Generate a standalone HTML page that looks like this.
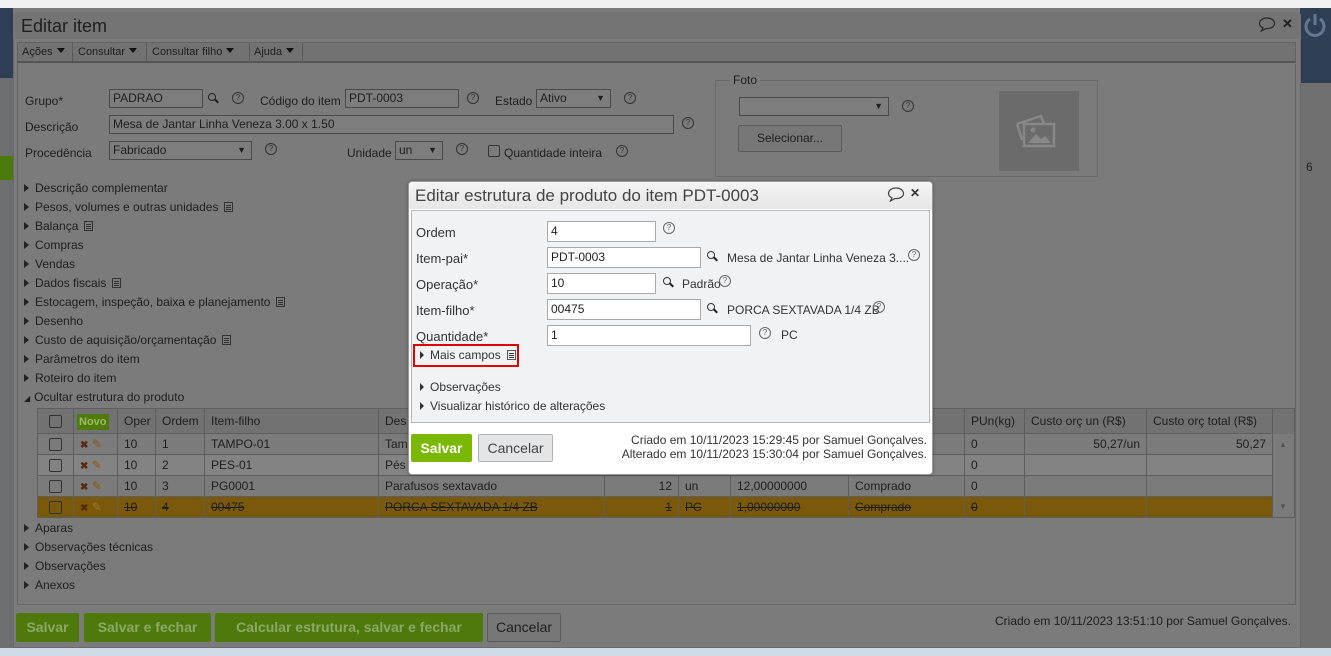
<!DOCTYPE html>
<html><head><meta charset="utf-8"><style>
*{box-sizing:border-box;margin:0;padding:0}
body{width:1331px;height:656px;position:relative;overflow:hidden;background:#7b7b7b;font-family:"Liberation Sans",sans-serif;font-size:12px;color:#1e1e1e}
.a{position:absolute;white-space:nowrap}
.q{position:absolute;width:12px;height:12px;border:1px solid #333;border-radius:50%;font-size:8px;line-height:10px;text-align:center;color:#333}
.inp{position:absolute;border:1px solid #4a4a4a;background:#7d7d7d;padding-left:3px;font-size:12px;line-height:16px;height:19px}
.sec{position:absolute;left:24px;font-size:12px}
.sec:before{content:"";display:inline-block;border-left:5px solid #222;border-top:4px solid transparent;border-bottom:4px solid transparent;margin-right:6px}
.doc{display:inline-block;width:9px;height:10px;border:1px solid #333;margin-left:6px;vertical-align:-1px;background:linear-gradient(#333,#333) 1px 2px/5px 1px no-repeat,linear-gradient(#333,#333) 1px 4px/5px 1px no-repeat,linear-gradient(#333,#333) 1px 6px/5px 1px no-repeat}
.tri{display:inline-block;border-top:5px solid #111;border-left:4px solid transparent;border-right:4px solid transparent;margin-left:4px;vertical-align:2px}
table{border-collapse:collapse;position:absolute;left:37px;top:408px;width:1257px;font-size:12px;table-layout:fixed}
td{border:1px solid #5e5e5e;padding:0 6px;height:21px;white-space:nowrap;overflow:hidden}
.cb{display:inline-block;width:13px;height:13px;border:1px solid #333;border-radius:2px;vertical-align:middle}
.m .q{border-color:#666;color:#666}
.m .in{position:absolute;border:1px solid #aaa;background:#fff;padding-left:3px;height:21px;line-height:19px;font-size:12px}
.ms{position:absolute;left:420px;font-size:12px;color:#333}
.ms:before{content:"";display:inline-block;border-left:4px solid #333;border-top:4px solid transparent;border-bottom:4px solid transparent;margin-right:6px}
.lens{position:absolute;width:8px;height:8px;border:1.5px solid #222;border-radius:50%}
.lens:after{content:"";position:absolute;left:5px;top:6px;width:5px;height:2px;background:#222;transform:rotate(45deg)}
.x{color:#5a2a10;font-size:10px;font-weight:bold}
</style></head><body>
<div class="a" style="left:0;top:0;width:1331px;height:8px;background:#f1f1f1"></div>
<div class="a" style="left:0;top:8px;width:13px;height:642px;background:#6d6e70"></div>
<div class="a" style="left:0;top:8px;width:13px;height:70px;background:#2e3f55"></div>
<div class="a" style="left:0;top:156px;width:13px;height:24px;background:#4b7a0a"></div>
<div class="a" style="left:1300px;top:8px;width:31px;height:642px;background:#707070"></div>
<div class="a" style="left:1300px;top:8px;width:31px;height:75px;background:#2e3f55"></div>
<svg class="a" style="left:1303px;top:12px" width="24" height="26" viewBox="0 0 24 26"><path d="M7 7 A9 9 0 1 0 17 7" fill="none" stroke="#62768f" stroke-width="3"/><path d="M12 2V13" stroke="#62768f" stroke-width="3"/></svg>
<div class="a" style="left:1306px;top:160px;font-size:12px">6</div>
<div class="a" style="left:0;top:648px;width:1331px;height:8px;background:#cfdce8"></div>
<!-- main dialog -->
<div class="a" style="left:13px;top:12px;width:1288px;height:636px;background:#7b7b7b;border:1px solid #6a6a6a;border-radius:4px 4px 0 0"></div>
<div class="a" style="left:13px;top:12px;width:1288px;height:27px;background:#747474;border-radius:4px 4px 0 0"></div>
<div class="a" style="left:21px;top:16px;font-size:18px;color:#202020">Editar item</div>
<svg class="a" style="left:1258px;top:17px" width="18" height="15" viewBox="0 0 18 15"><path d="M9 1C4.5 1 1.5 3.5 1.5 6.5C1.5 8.5 3 10 5 10.8L3.5 14L8 11.5C13 12 16.5 9.5 16.5 6.5C16.5 3.5 13.5 1 9 1Z" fill="none" stroke="#2a2a2a" stroke-width="1.2"/></svg>
<div class="a" style="left:1282px;top:16px;font-size:13px;font-weight:bold">✕</div>
<div class="a" style="left:17px;top:42px;width:1279px;height:21px;background:#727272;border:1px solid #626262;border-bottom:2px solid #555"></div>
<div class="a" style="left:22px;top:46px;font-size:11px">Ações<span class="tri"></span></div>
<div class="a" style="left:72px;top:43px;width:1px;height:19px;background:#5a5a5a"></div>
<div class="a" style="left:78px;top:46px;font-size:11px">Consultar<span class="tri"></span></div>
<div class="a" style="left:146px;top:43px;width:1px;height:19px;background:#5a5a5a"></div>
<div class="a" style="left:152px;top:46px;font-size:11px">Consultar filho<span class="tri"></span></div>
<div class="a" style="left:249px;top:43px;width:1px;height:19px;background:#5a5a5a"></div>
<div class="a" style="left:254px;top:46px;font-size:11px">Ajuda<span class="tri"></span></div>
<div class="a" style="left:302px;top:43px;width:1px;height:19px;background:#5a5a5a"></div>
<div class="a" style="left:17px;top:64px;width:1279px;height:541px;border:1px solid #666;border-top:none"></div>

<div class="a" style="left:25px;top:94px">Grupo*</div>
<div class="inp" style="left:109px;top:89px;width:94px">PADRAO</div>
<div class="lens" style="left:208px;top:93px"></div>
<div class="q" style="left:232px;top:92px">?</div>
<div class="a" style="left:260px;top:94px">Código do item</div>
<div class="inp" style="left:345px;top:89px;width:114px">PDT-0003</div>
<div class="q" style="left:467px;top:92px">?</div>
<div class="a" style="left:495px;top:94px">Estado</div>
<div class="inp" style="left:536px;top:89px;width:75px">Ativo<span style="position:absolute;right:5px;font-size:9px">▼</span></div>
<div class="q" style="left:624px;top:92px">?</div>
<div class="a" style="left:25px;top:120px">Descrição</div>
<div class="inp" style="left:109px;top:115px;width:565px">Mesa de Jantar Linha Veneza 3.00 x 1.50</div>
<div class="q" style="left:682px;top:117px">?</div>
<div class="a" style="left:25px;top:146px">Procedência</div>
<div class="inp" style="left:109px;top:141px;width:143px">Fabricado<span style="position:absolute;right:5px;font-size:9px">▼</span></div>
<div class="q" style="left:265px;top:143px">?</div>
<div class="a" style="left:347px;top:146px">Unidade</div>
<div class="inp" style="left:395px;top:141px;width:48px">un<span style="position:absolute;right:5px;font-size:9px">▼</span></div>
<div class="q" style="left:456px;top:143px">?</div>
<div class="a" style="left:488px;top:145px;width:12px;height:12px;border:1px solid #333;border-radius:2px"></div>
<div class="a" style="left:504px;top:146px">Quantidade inteira</div>
<div class="q" style="left:616px;top:145px">?</div>
<div class="a" style="left:715px;top:80px;width:383px;height:97px;border:1px solid #6a6a6a"></div>
<div class="a" style="left:730px;top:73px;background:#7b7b7b;padding:0 3px">Foto</div>
<div class="inp" style="left:739px;top:97px;width:150px"><span style="position:absolute;right:5px;font-size:9px">▼</span></div>
<div class="q" style="left:902px;top:100px">?</div>
<div class="a" style="left:738px;top:125px;width:104px;height:27px;border:1px solid #5c5c5c;background:#777;border-radius:2px;text-align:center;line-height:25px">Selecionar...</div>
<div class="a" style="left:999px;top:91px;width:80px;height:80px;background:#6b6b6b"></div>
<svg class="a" style="left:1014px;top:110px" width="46" height="40" viewBox="0 0 46 40"><path d="M3 14L27 6L30 14" fill="none" stroke="#888" stroke-width="2.5"/><rect x="10" y="14" width="30" height="22" fill="none" stroke="#888" stroke-width="2.5"/><path d="M14 33L22 24L27 29L31 26L37 33Z" fill="#888"/><circle cx="19" cy="20" r="2.5" fill="#888"/><path d="M3 14L8 30" stroke="#888" stroke-width="2.5"/></svg>

<div class="sec" style="top:181px">Descrição complementar</div>
<div class="sec" style="top:200px">Pesos, volumes e outras unidades<span class="doc"></span></div>
<div class="sec" style="top:219px">Balança<span class="doc"></span></div>
<div class="sec" style="top:238px">Compras</div>
<div class="sec" style="top:257px">Vendas</div>
<div class="sec" style="top:276px">Dados fiscais<span class="doc"></span></div>
<div class="sec" style="top:295px">Estocagem, inspeção, baixa e planejamento<span class="doc"></span></div>
<div class="sec" style="top:314px">Desenho</div>
<div class="sec" style="top:333px">Custo de aquisição/orçamentação<span class="doc"></span></div>
<div class="sec" style="top:352px">Parâmetros do item</div>
<div class="sec" style="top:371px">Roteiro do item</div>
<div class="a" style="left:24px;top:390px"><span style="font-size:8px;margin-right:4px">◢</span>Ocultar estrutura do produto</div>

<table>
<colgroup><col style="width:36px"><col style="width:44px"><col style="width:38px"><col style="width:49px"><col style="width:174px"><col style="width:226px"><col style="width:74px"><col style="width:52px"><col style="width:118px"><col style="width:116px"><col style="width:60px"><col style="width:122px"><col style="width:126px"><col style="width:22px"></colgroup>
<tr style="background:#727272;height:25px"><td style="text-align:center"><span class="cb"></span></td><td style="padding:0 3px"><span style="background:#4f7a0c;color:#9aba66;font-weight:bold;font-size:11px;padding:2px 2px">Novo</span></td><td>Oper</td><td>Ordem</td><td>Item-filho</td><td>Des</td><td></td><td></td><td></td><td></td><td>PUn(kg)</td><td>Custo orç un (R$)</td><td>Custo orç total (R$)</td><td style="border-bottom:none"></td></tr>
<tr><td style="text-align:center"><span class="cb"></span></td><td><span class="x">✖</span> <span style="color:#8a5a10">✎</span></td><td>10</td><td>1</td><td>TAMPO-01</td><td>Tam</td><td></td><td></td><td></td><td></td><td>0</td><td style="text-align:right">50,27/un</td><td style="text-align:right">50,27</td><td style="border-top:none;border-bottom:none;font-size:8px;color:#555">▲</td></tr>
<tr style="background:#838383"><td style="text-align:center"><span class="cb"></span></td><td><span class="x">✖</span> <span style="color:#8a5a10">✎</span></td><td>10</td><td>2</td><td>PES-01</td><td>Pés</td><td></td><td></td><td></td><td></td><td>0</td><td></td><td></td><td style="border-top:none;border-bottom:none;background:#7b7b7b"></td></tr>
<tr><td style="text-align:center"><span class="cb"></span></td><td><span class="x">✖</span> <span style="color:#8a5a10">✎</span></td><td>10</td><td>3</td><td>PG0001</td><td>Parafusos sextavado</td><td style="text-align:right">12</td><td>un</td><td>12,00000000</td><td>Comprado</td><td>0</td><td></td><td></td><td style="border-top:none;border-bottom:none"></td></tr>
<tr style="background:#7a5a0a"><td style="text-align:center"><span class="cb"></span></td><td><span class="x">✖</span> <span style="color:#9a7a30">✎</span></td><td><s>10</s></td><td><s>4</s></td><td><s>00475</s></td><td><s>PORCA SEXTAVADA 1/4 ZB</s></td><td style="text-align:right"><s>1</s></td><td><s>PC</s></td><td><s>1,00000000</s></td><td><s>Comprado</s></td><td><s>0</s></td><td></td><td></td><td style="background:#7b7b7b;border-top:none;font-size:8px;color:#555">▼</td></tr>
</table>

<div class="sec" style="top:521px">Aparas</div>
<div class="sec" style="top:540px">Observações técnicas</div>
<div class="sec" style="top:559px">Observações</div>
<div class="sec" style="top:578px">Anexos</div>

<div class="a" style="left:16px;top:613px;width:63px;height:29px;background:#4d7a0a;border-radius:2px;color:#8aa868;font-weight:bold;font-size:14px;text-align:center;line-height:29px">Salvar</div>
<div class="a" style="left:84px;top:613px;width:127px;height:29px;background:#4d7a0a;border-radius:2px;color:#8aa868;font-weight:bold;font-size:14px;text-align:center;line-height:29px">Salvar e fechar</div>
<div class="a" style="left:215px;top:613px;width:268px;height:29px;background:#4d7a0a;border-radius:2px;color:#8aa868;font-weight:bold;font-size:14px;text-align:center;line-height:29px">Calcular estrutura, salvar e fechar</div>
<div class="a" style="left:487px;top:613px;width:74px;height:29px;background:#777;border:1px solid #5c5c5c;border-radius:2px;font-size:14px;text-align:center;line-height:27px">Cancelar</div>
<div class="a" style="left:995px;top:614px;font-size:12px">Criado em 10/11/2023 13:51:10 por Samuel Gonçalves.</div>

<div class="m">
<div class="a" style="left:408px;top:181px;width:525px;height:294px;background:#fff;border:1px solid #9a9a9a;border-radius:4px;box-shadow:0 0 3px rgba(0,0,0,.3)"></div>
<div class="a" style="left:409px;top:182px;width:523px;height:27px;background:linear-gradient(#f4f4f4,#e6e6e6);border-radius:4px 4px 0 0"></div>
<div class="a" style="left:415px;top:186px;font-size:17px;color:#444">Editar estrutura de produto do item PDT-0003</div>
<svg class="a" style="left:887px;top:187px" width="18" height="15" viewBox="0 0 18 15"><path d="M9 1C4.5 1 1.5 3.5 1.5 6.5C1.5 8.5 3 10 5 10.8L3.5 14L8 11.5C13 12 16.5 9.5 16.5 6.5C16.5 3.5 13.5 1 9 1Z" fill="none" stroke="#444" stroke-width="1.2"/></svg>
<div class="a" style="left:910px;top:186px;font-size:12px;font-weight:bold;color:#333">✕</div>
<div class="a" style="left:411px;top:210px;width:519px;height:213px;background:#f1f2f4;border:1px solid #b6b6b6"></div>
<div class="a" style="left:416px;top:225px;color:#333;font-size:13px">Ordem</div>
<div class="in" style="left:547px;top:221px;width:109px">4</div>
<div class="q" style="left:663px;top:222px">?</div>
<div class="a" style="left:416px;top:251px;color:#333;font-size:13px">Item-pai*</div>
<div class="in" style="left:547px;top:247px;width:154px">PDT-0003</div>
<div class="lens" style="left:707px;top:251px;border-color:#333"></div>
<div class="a" style="left:727px;top:251px;font-size:12px;color:#333">Mesa de Jantar Linha Veneza 3....</div>
<div class="q" style="left:908px;top:249px">?</div>
<div class="a" style="left:416px;top:277px;color:#333;font-size:13px">Operação*</div>
<div class="in" style="left:547px;top:273px;width:109px">10</div>
<div class="lens" style="left:663px;top:277px;border-color:#333"></div>
<div class="a" style="left:682px;top:277px;font-size:12px;color:#333">Padrão</div>
<div class="q" style="left:719px;top:275px">?</div>
<div class="a" style="left:416px;top:303px;color:#333;font-size:13px">Item-filho*</div>
<div class="in" style="left:547px;top:299px;width:154px">00475</div>
<div class="lens" style="left:707px;top:303px;border-color:#333"></div>
<div class="a" style="left:727px;top:303px;font-size:12px;color:#333">PORCA SEXTAVADA 1/4 ZB</div>
<div class="q" style="left:873px;top:301px">?</div>
<div class="a" style="left:416px;top:329px;color:#333;font-size:13px">Quantidade*</div>
<div class="in" style="left:547px;top:325px;width:204px">1</div>
<div class="q" style="left:759px;top:327px">?</div>
<div class="a" style="left:781px;top:328px;font-size:12px;color:#333">PC</div>
<div class="a" style="left:413px;top:344px;width:106px;height:23px;border:2px solid #e00000"></div>
<div class="ms" style="top:348px;font-size:12px">Mais campos<span class="doc" style="border-color:#555"></span></div>
<div class="ms" style="top:380px">Observações</div>
<div class="ms" style="top:399px">Visualizar histórico de alterações</div>
<div class="a" style="left:411px;top:434px;width:61px;height:28px;background:#7ab800;border-radius:2px;color:#fff;font-weight:bold;font-size:14px;text-align:center;line-height:28px">Salvar</div>
<div class="a" style="left:478px;top:434px;width:75px;height:28px;background:#e4e5e7;border:1px solid #b2b2b2;border-radius:2px;color:#444;font-size:14px;text-align:center;line-height:26px">Cancelar</div>
<div class="a" style="left:600px;top:433px;width:327px;text-align:right;font-size:12px;line-height:14px;color:#333">Criado em 10/11/2023 15:29:45 por Samuel Gonçalves.<br>Alterado em 10/11/2023 15:30:04 por Samuel Gonçalves.</div>
</div>
</body></html>
